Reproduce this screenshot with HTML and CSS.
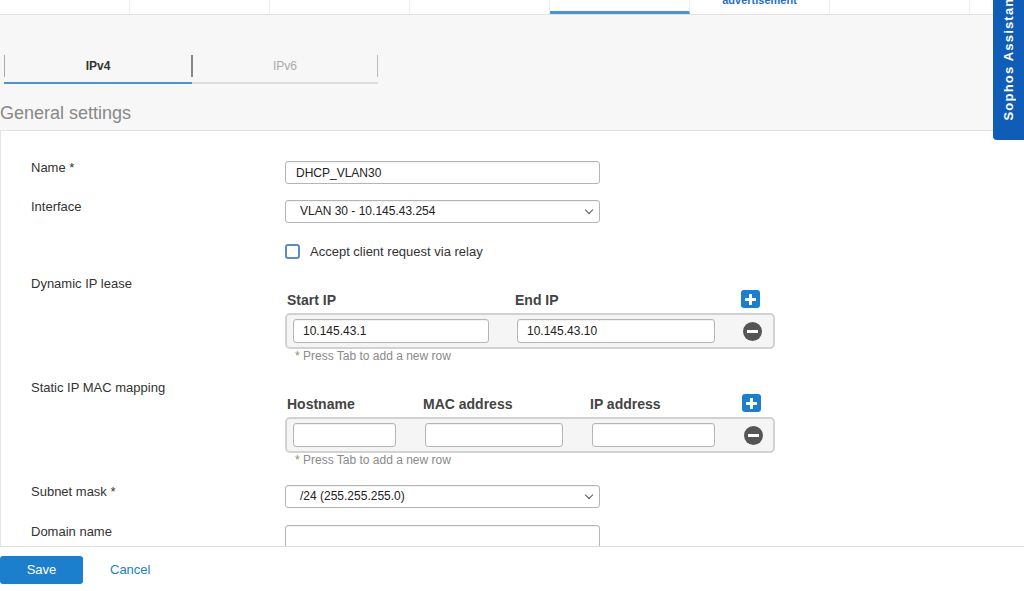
FILE: index.html
```html
<!DOCTYPE html>
<html>
<head>
  <title>DHCP server - Add</title>
  <link rel="stylesheet" href="styles.css">
</head>
<body>
  <div class="topnav">
    <div class="topnav-tab"></div>
    <div class="topnav-tab"></div>
    <div class="topnav-tab"></div>
    <div class="topnav-tab"></div>
    <div class="topnav-tab active"></div>
    <div class="topnav-tab"><span class="cut-label">advertisement</span></div>
    <div class="topnav-tab"></div>
    <div class="topnav-tab"></div>
  </div>

  <div class="assistant"><span>Sophos Assistant</span></div>

  <div class="page">
    <div class="ip-tabs">
      <div class="ip-tab selected">IPv4</div>
      <div class="ip-tab">IPv6</div>
    </div>

    <h3 class="section-title">General settings</h3>

    <div class="panel">
      <div class="form-row">
        <label class="form-label">Name *</label>
        <input type="text" class="field" value="DHCP_VLAN30">
      </div>

      <div class="form-row gap-check">
        <label class="form-label">Interface</label>
        <div class="field select">VLAN 30 - 10.145.43.254</div>
      </div>

      <div class="form-row">
        <span class="form-label"></span>
        <label class="check"><span class="check-box"></span>Accept client request via relay</label>
      </div>

      <div class="form-row gap-table">
        <label class="form-label">Dynamic IP lease</label>
        <div class="table-col">
          <div class="grid-head dyn">
            <span>Start IP</span>
            <span>End IP</span>
            <span class="plus"></span>
          </div>
          <div class="grid-box dyn">
            <input type="text" class="field small" value="10.145.43.1">
            <input type="text" class="field small" value="10.145.43.10">
            <span class="minus"></span>
          </div>
          <div class="hint">* Press Tab to add a new row</div>
        </div>
      </div>

      <div class="form-row gap-table">
        <label class="form-label">Static IP MAC mapping</label>
        <div class="table-col">
          <div class="grid-head mac">
            <span>Hostname</span>
            <span>MAC address</span>
            <span>IP address</span>
            <span class="plus"></span>
          </div>
          <div class="grid-box mac">
            <input type="text" class="field small">
            <input type="text" class="field small">
            <input type="text" class="field small">
            <span class="minus"></span>
          </div>
          <div class="hint">* Press Tab to add a new row</div>
        </div>
      </div>

      <div class="form-row gap-subnet">
        <label class="form-label">Subnet mask *</label>
        <div class="field select">/24 (255.255.255.0)</div>
      </div>

      <div class="form-row">
        <label class="form-label">Domain name</label>
        <input type="text" class="field">
      </div>
    </div>
  </div>

  <div class="footer">
    <button class="btn-save">Save</button>
    <a class="btn-cancel">Cancel</a>
  </div>
</body>
</html>
```

FILE: styles.css
```css
* {
  box-sizing: border-box;
}

body {
  margin: 0;
  width: 1024px;
  height: 591px;
  overflow: hidden;
  background-color: #F7F7F7;
  font-family: "Liberation Sans", Arial, sans-serif;
  color: #333;
  position: relative;
}

.topnav {
  display: flex;
  height: 15px;
  background-color: #FFF;
  border-bottom: 1px solid #E2E2E2;
  overflow: hidden;
}

.topnav-tab {
  flex: none;
  width: 140px;
  height: 14px;
  border-right: 1px solid #EEE;
  position: relative;
  text-align: center;
}

.topnav-tab:first-child {
  width: 130px;
}

.topnav-tab.active {
  border-bottom: 3px solid #4C93D3;
}

.cut-label {
  position: absolute;
  left: 0;
  right: 0;
  bottom: 8px;
  line-height: 12px;
  font-size: 11px;
  font-weight: bold;
  color: #2A6FC0;
}

.assistant {
  position: absolute;
  top: 0;
  right: 0;
  width: 31px;
  height: 140px;
  background-color: #0F5DB7;
  border-bottom-left-radius: 4px;
  overflow: hidden;
}

.assistant span {
  position: absolute;
  left: 7px;
  bottom: 19px;
  color: #FFF;
  font-size: 13px;
  font-weight: bold;
  letter-spacing: 1.2px;
  line-height: 17px;
  white-space: nowrap;
  writing-mode: vertical-rl;
  transform: rotate(180deg);
}

.ip-tabs {
  display: flex;
  margin: 37px 0 0 4px;
  width: 374px;
}

.ip-tab {
  flex: 1;
  height: 32px;
  padding-top: 5px;
  text-align: center;
  font-size: 12px;
  line-height: 18px;
  color: #AAA;
  border-bottom: 2px solid #DDD;
  position: relative;
}

.ip-tab::before {
  content: "";
  position: absolute;
  left: 0;
  top: 3px;
  width: 1px;
  height: 22px;
  background-color: #AAA;
}

.ip-tab:first-child {
  flex: 0 0 188px;
}

.ip-tab:last-child::before {
  width: 2px;
  left: -1px;
  background-color: #888;
}

.ip-tab:last-child::after {
  content: "";
  position: absolute;
  right: 0;
  top: 3px;
  width: 1px;
  height: 22px;
  background-color: #BBB;
}

.ip-tab.selected {
  color: #333;
  font-weight: bold;
  border-bottom-color: #4C93D3;
}

.section-title {
  margin: 18px 0 0 0;
  height: 28px;
  font-size: 18px;
  font-weight: normal;
  color: #888;
  line-height: 22px;
}

.panel {
  background-color: #FFF;
  border-top: 1px solid #E2E2E2;
  border-left: 1px solid #E4E4E4;
  height: 420px;
  padding: 30px 0 0 30px;
  overflow: hidden;
}

.form-row {
  display: flex;
  align-items: flex-start;
  margin-bottom: 16px;
}

.form-row.gap-check {
  margin-bottom: 20px;
}

.form-row.gap-table {
  margin-top: 18px;
  margin-bottom: 0;
}

.form-row.gap-subnet {
  margin-top: 18px;
  margin-bottom: 17px;
}

.form-label {
  width: 254px;
  flex: none;
  font-size: 13px;
  line-height: 14px;
  color: #333;
}

.field {
  width: 315px;
  height: 23px;
  border: 1px solid #B5B5B5;
  border-radius: 3px;
  background-color: #FFF;
  box-shadow: inset 0 1px 1px rgba(0, 0, 0, 0.06);
  font-family: "Liberation Sans", Arial, sans-serif;
  font-size: 12px;
  color: #222;
  padding: 0 10px;
  margin: 0;
  line-height: 21px;
  outline: none;
}

.field.select {
  padding-left: 14px;
  position: relative;
}

.field.select::after {
  content: "";
  position: absolute;
  right: 7px;
  top: 6px;
  width: 5px;
  height: 5px;
  border-right: 1.5px solid #555;
  border-bottom: 1.5px solid #555;
  transform: rotate(45deg);
}

.field.small {
  width: auto;
  height: 24px;
  min-width: 0;
  padding-left: 9px;
}

.check {
  display: flex;
  align-items: center;
  font-size: 13px;
  color: #333;
  height: 16px;
}

.check-box {
  width: 15px;
  height: 15px;
  border: 2px solid #5A8CC8;
  border-radius: 3px;
  margin-right: 10px;
}

.table-col {
  margin-top: 12px;
  width: 490px;
}

.grid-head,
.grid-box {
  display: grid;
  align-items: center;
  padding: 0 12px 0 6px;
}

.dyn {
  grid-template-columns: 196px 198px 19px;
  column-gap: 28px;
}

.mac {
  grid-template-columns: 103px 138px 123px 19px;
  column-gap: 29px;
}

.grid-head {
  height: 24px;
  align-items: start;
  font-size: 14px;
  font-weight: bold;
  color: #444;
  line-height: 20px;
  padding-top: 1px;
}

.grid-head span:first-child {
  margin-left: -4px;
}

.grid-box {
  height: 36px;
  border: 2px solid #D2D2D2;
  border-radius: 5px;
  background-color: #F5F5F5;
}

.plus {
  width: 19px;
  height: 18px;
  background-color: #1A7FCF;
  border-radius: 3px;
  position: relative;
}

.plus::before,
.plus::after {
  content: "";
  position: absolute;
  background-color: #FFF;
}

.plus::before {
  left: 4px;
  top: 8px;
  width: 11px;
  height: 3px;
}

.plus::after {
  left: 8px;
  top: 4px;
  width: 3px;
  height: 11px;
}

.minus {
  width: 19px;
  height: 19px;
  border-radius: 50%;
  background-color: #555;
  position: relative;
}

.minus::after {
  content: "";
  position: absolute;
  left: 4px;
  top: 8px;
  width: 11px;
  height: 3px;
  background-color: #FFF;
}

.hint {
  font-size: 12px;
  line-height: 14px;
  color: #8A8A8A;
  padding-left: 10px;
}

.footer {
  position: absolute;
  left: 0;
  right: 0;
  bottom: 0;
  height: 45px;
  background-color: #FFF;
  border-top: 1px solid #DCDCDC;
  display: flex;
  align-items: center;
  gap: 27px;
}

.btn-save {
  width: 83px;
  height: 28px;
  margin-top: 1px;
  background-color: #1C7FCD;
  color: #FFF;
  border: none;
  border-radius: 3px;
  font-family: "Liberation Sans", Arial, sans-serif;
  font-size: 13px;
  cursor: pointer;
}

.btn-cancel {
  color: #1C7FCD;
  font-size: 13px;
  cursor: pointer;
}
```
